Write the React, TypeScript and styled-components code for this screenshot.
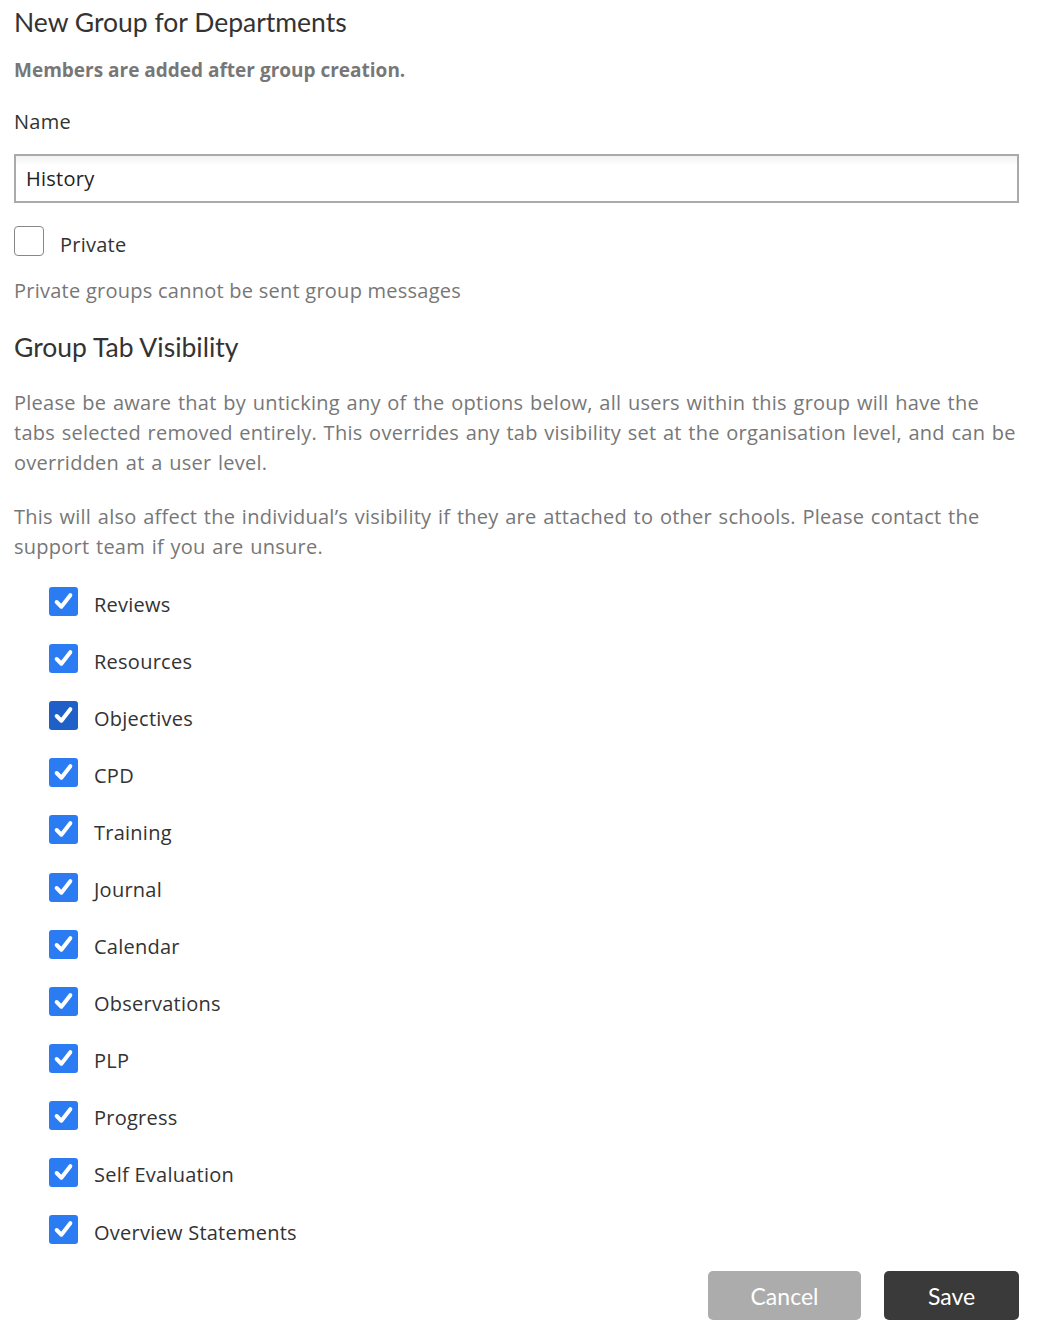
import React, { useState } from "react";
import styled, { createGlobalStyle } from "styled-components";

const GlobalStyle = createGlobalStyle`
  body {
    margin: 0;
    background: #fff;
    font-family: "Open Sans", "Noto Sans", sans-serif;
    color: #333;
  }
`;

const Page = styled.form`
  padding: 6px 25px 18px 14px;
  display: flex;
  flex-direction: column;
`;

const Title = styled.h1`
  margin: 0;
  font: 400 26.5px/32px "Lato", sans-serif;
  color: #333;
`;

const Lead = styled.p`
  margin: 18px 0 0;
  font: 700 19px/28px "Open Sans", sans-serif;
  color: #777;
`;

const Label = styled.label`
  margin-top: 24px;
  font: 400 20px/28px "Open Sans", sans-serif;
  letter-spacing: 0.25px;
  color: #333;
`;

const TextInput = styled.input`
  margin-top: 18px;
  height: 49px;
  box-sizing: border-box;
  border: 2px solid #aaa;
  padding: 0 10px;
  font: 400 20px "Open Sans", sans-serif;
  letter-spacing: 0.25px;
  color: #222;
  background: linear-gradient(#f2f2f2, #fff 10px);
  outline: none;
`;

const PrivateRow = styled.label`
  margin-top: 28px;
  display: flex;
  align-items: center;
  gap: 16px;
  font: 400 20px/28px "Open Sans", sans-serif;
  letter-spacing: 0.25px;
  color: #333;
  cursor: pointer;
`;

const EmptyBox = styled.span`
  width: 30px;
  height: 30px;
  box-sizing: border-box;
  border: 1px solid #888;
  border-radius: 4px;
  margin-top: -8px;
  background: #fff;
`;

const Help = styled.p`
  margin: 18px 0 0;
  font: 400 20px/28px "Open Sans", sans-serif;
  letter-spacing: 0.25px;
  color: #777;
`;

const SectionTitle = styled.h2`
  margin: 26px 0 0;
  font: 400 26.5px/32px "Lato", sans-serif;
  color: #333;
`;

const Para = styled.p<{ $gap: number }>`
  margin: ${p => p.$gap}px -4px 0 0;
  font: 400 20px/30px "Open Sans", sans-serif;
  letter-spacing: 0.25px;
  word-spacing: 1.2px;
  color: #777;
`;

const TabList = styled.div`
  margin-top: 14px;
  display: flex;
  flex-direction: column;
  padding-left: 35px;
`;

const TabRow = styled.label`
  height: 57.1px;
  display: flex;
  align-items: center;
  gap: 16px;
  font: 400 20px/28px "Open Sans", sans-serif;
  letter-spacing: 0.25px;
  color: #333;
  cursor: pointer;
`;

const TickBox = styled.span<{ $focus?: boolean }>`
  width: 29px;
  height: 29px;
  margin-top: -6px;
  border-radius: 3px;
  background: ${p => (p.$focus ? "#1f5fc8" : "#2b7bf2")};
  display: flex;
  align-items: center;
  justify-content: center;
  flex-shrink: 0;
`;

const Actions = styled.div`
  margin-top: 10px;
  display: flex;
  justify-content: flex-end;
  gap: 23px;
`;

const Button = styled.button<{ $primary?: boolean }>`
  height: 49px;
  width: ${p => (p.$primary ? 135 : 153)}px;
  border: none;
  border-radius: 5px;
  background: ${p => (p.$primary ? "#3a3a3a" : "#acacac")};
  color: #fff;
  font: 400 23px "Lato", sans-serif;
  cursor: pointer;
`;

const tabs = [
  "Reviews",
  "Resources",
  "Objectives",
  "CPD",
  "Training",
  "Journal",
  "Calendar",
  "Observations",
  "PLP",
  "Progress",
  "Self Evaluation",
  "Overview Statements",
];

const Tick = () => (
  <svg width="21" height="21" viewBox="0 0 20 20">
    <path
      d="M3.5 10.5 L8 15 L16.5 4"
      fill="none"
      stroke="#fff"
      strokeWidth="3.8"
      strokeLinecap="round"
      strokeLinejoin="round"
    />
  </svg>
);

const App = () => {
  const [name, setName] = useState("History");

  return (
    <>
      <GlobalStyle />
      <Page onSubmit={e => e.preventDefault()}>
        <Title>New Group for Departments</Title>
        <Lead>Members are added after group creation.</Lead>
        <Label htmlFor="group-name">Name</Label>
        <TextInput
          id="group-name"
          value={name}
          onChange={e => setName(e.target.value)}
        />
        <PrivateRow>
          <EmptyBox />
          Private
        </PrivateRow>
        <Help>Private groups cannot be sent group messages</Help>

        <SectionTitle>Group Tab Visibility</SectionTitle>
        <Para $gap={25}>
          Please be aware that by unticking any of the options below, all users
          within this group will have the tabs selected removed entirely. This
          overrides any tab visibility set at the organisation level, and can
          be overridden at a user level.
        </Para>
        <Para $gap={24}>
          This will also affect the individual’s visibility if they are
          attached to other schools. Please contact the support team if you are
          unsure.
        </Para>

        <TabList>
          {tabs.map(tab => (
            <TabRow key={tab}>
              <TickBox $focus={tab === "Objectives"}>
                <Tick />
              </TickBox>
              {tab}
            </TabRow>
          ))}
        </TabList>

        <Actions>
          <Button type="button">Cancel</Button>
          <Button type="submit" $primary>
            Save
          </Button>
        </Actions>
      </Page>
    </>
  );
};

export default App;
